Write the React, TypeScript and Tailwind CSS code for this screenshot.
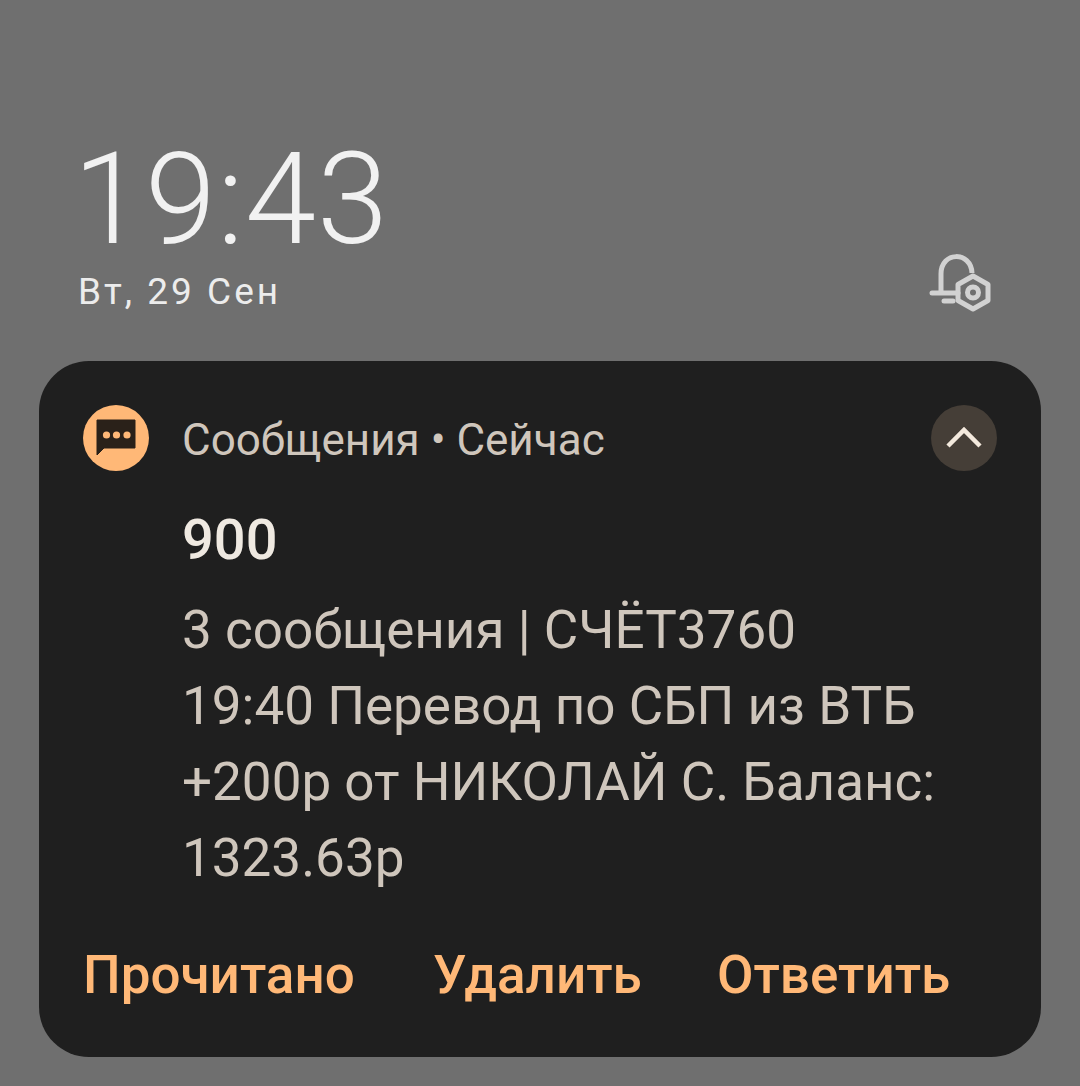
export default function App() {
  return (
    <div className="w-[1080px] h-[1086px] bg-[#6f6f6f] overflow-hidden font-['Roboto',sans-serif] px-[39px] pt-[140px]">
      <div className="pl-[39px] pr-[48px] flex justify-between items-end h-[221px] pb-[48px]">
        <div className="flex flex-col">
          <div className="text-[128px] leading-[118px] font-light text-[#f1f1f1] tracking-[1px] ml-[-5px]">19:43</div>
          <div className="text-[37px] leading-[42px] text-[#ececec] tracking-[3px] mt-[13px]">Вт, 29 Сен</div>
        </div>
        <svg width="64" height="60" viewBox="0 0 64 60" fill="none" stroke="#d2d2d2" strokeWidth="5" className="mb-[1px]">
          <path d="M12 40 V22 C12 -1 42 -1 43 21" />
          <path d="M3 41 H29" strokeLinecap="round" />
          <path d="M15 49 H24" strokeLinecap="round" />
          <path d="M44 24 L59 32.5 V48.5 L44 57 L29 48.5 V32.5 Z" strokeLinejoin="round" />
          <circle cx="44" cy="40.5" r="5.5" />
        </svg>
      </div>
      <div className="w-[1002px] h-[696px] bg-[#1f1f1f] rounded-[50px] pt-[44px] pl-[44px] pr-[44px]">
        <div className="flex items-center h-[66px]">
          <div className="w-[66px] h-[66px] rounded-full bg-[#ffb877] flex items-center justify-center shrink-0">
            <svg width="40" height="38" viewBox="0 0 40 38">
              <path d="M1 1 H39 V29 H8 L1 36 Z" fill="#2a2119" stroke="#2a2119" strokeWidth="1" strokeLinejoin="round" />
              <circle cx="10.5" cy="16" r="3.6" fill="#ffb877" />
              <circle cx="20.5" cy="16" r="3.6" fill="#ffb877" />
              <circle cx="31" cy="16" r="3.6" fill="#ffb877" />
            </svg>
          </div>
          <div className="ml-[33px] mt-[4px] text-[44px] leading-[44px] text-[#cfc6bc] whitespace-nowrap">Сообщения • Сейчас</div>
          <div className="ml-auto w-[66px] h-[66px] rounded-full bg-[#453e37] flex items-center justify-center">
            <svg width="36" height="22" viewBox="0 0 36 22" fill="none" stroke="#f3e9dd" strokeWidth="4.5" className="mt-[-3px]">
              <path d="M2 20 L18 4 L34 20" />
            </svg>
          </div>
        </div>
        <div className="pl-[99px] mt-[40px]">
          <div className="text-[56px] leading-[58px] font-medium text-[#efe9e1]">900</div>
          <div className="mt-[23px] text-[53px] leading-[76px] text-[#cfc6bc] whitespace-nowrap">
            <div>3 сообщения | СЧЁТ3760</div>
            <div>19:40 Перевод по СБП из ВТБ</div>
            <div>+200р от НИКОЛАЙ С. Баланс:</div>
            <div>1323.63р</div>
          </div>
        </div>
        <div className="flex mt-[49px] text-[53px] leading-[60px] font-medium text-[#ffb877] whitespace-nowrap">
          <span className="w-[350px]">Прочитано</span>
          <span className="w-[284px]">Удалить</span>
          <span>Ответить</span>
        </div>
      </div>
    </div>
  );
}
